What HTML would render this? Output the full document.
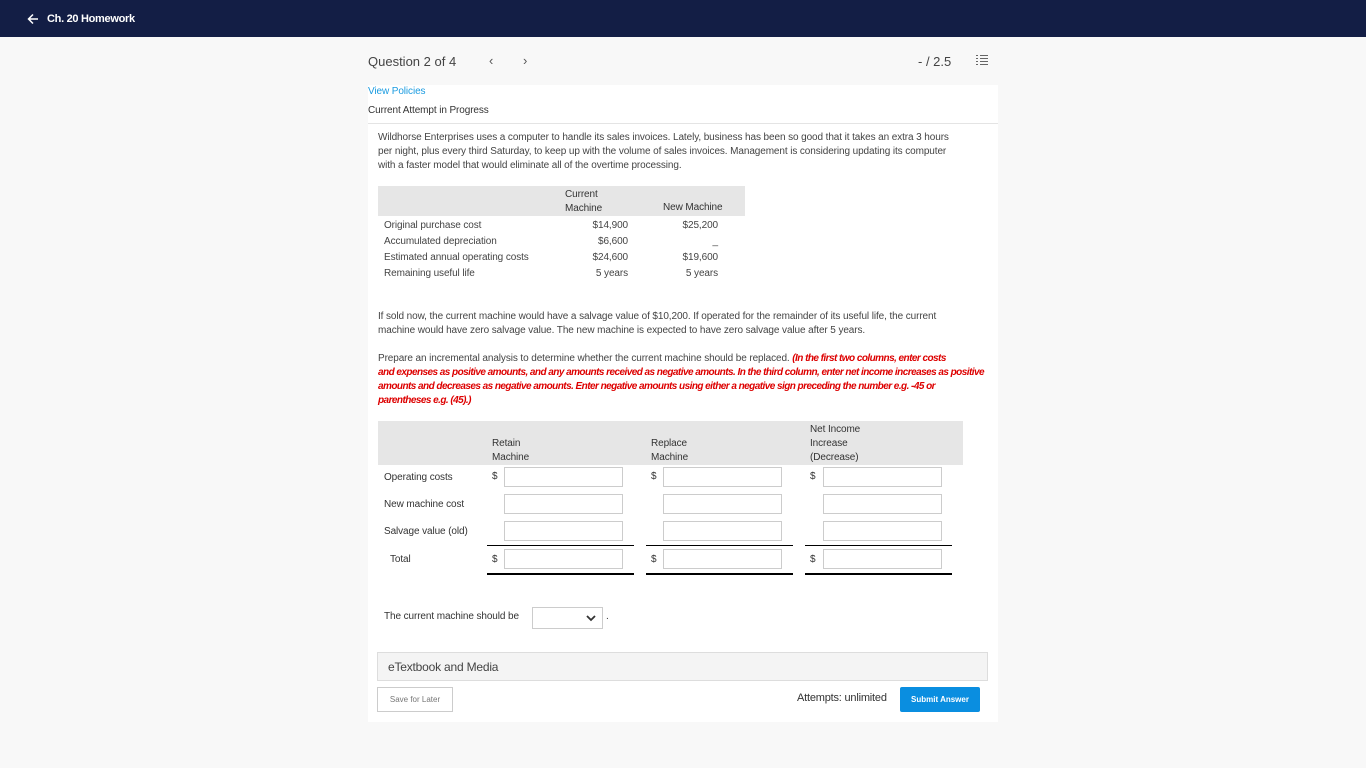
<!DOCTYPE html><html><head><style>
body{margin:0;width:1366px;height:768px;background:#f8f8f8;font-family:"Liberation Sans",sans-serif;color:#333;position:relative;overflow:hidden}
.a{position:absolute;white-space:nowrap}
.t{font-size:10px;letter-spacing:-0.1px}
.r{color:#d00;font-weight:bold;font-style:italic;letter-spacing:-0.55px}
.inp{position:absolute;width:119px;height:20px;border:1px solid #ccc;background:#fff;box-sizing:border-box}
.ln{position:absolute;height:1px;background:#000}
.ln2{position:absolute;height:2px;background:#000}
</style></head><body>
<div class="a" style="left:0;top:0;width:1366px;height:37px;background:#131e45"></div>
<svg class="a" style="left:27px;top:13px" width="12" height="12" viewBox="0 0 12 12"><path d="M11 6H1.5M6 1.5L1.5 6 6 10.5" stroke="#fff" stroke-width="1.5" fill="none"/></svg>
<div class="a" style="left:47px;top:13px;color:#fff;font-weight:bold;font-size:11px;letter-spacing:-0.3px">Ch. 20 Homework</div>
<div class="a" style="left:368px;top:54px;font-size:13px;color:#444">Question 2 of 4</div>
<div class="a" style="left:489px;top:53px;font-size:13px;color:#555">‹</div>
<div class="a" style="left:523px;top:53px;font-size:13px;color:#555">›</div>
<div class="a" style="left:918px;top:54px;font-size:13px;color:#444">- / 2.5</div>
<svg class="a" style="left:976px;top:54px" width="12" height="12" viewBox="0 0 12 12"><g stroke="#666" stroke-width="1"><path d="M0 1.5h2M4 1.5h8M0 4.5h2M4 4.5h8M0 7.5h2M4 7.5h8M0 10.5h2M4 10.5h8"/></g></svg>
<div class="a" style="left:368px;top:85px;width:630px;height:637px;background:#fff"></div>
<div class="a t" style="left:368px;top:86px;color:#1a9be0">View Policies</div>
<div class="a t" style="left:368px;top:105px;color:#333">Current Attempt in Progress</div>
<div class="a" style="left:368px;top:123px;width:630px;height:1px;background:#e4e4e4"></div>
<div class="a t" style="left:378px;top:131px;line-height:14px;color:#444">Wildhorse Enterprises uses a computer to handle its sales invoices. Lately, business has been so good that it takes an extra 3 hours<br>per night, plus every third Saturday, to keep up with the volume of sales invoices. Management is considering updating its computer<br>with a faster model that would eliminate all of the overtime processing.</div>
<div class="a" style="left:378px;top:186px;width:367px;height:30px;background:#e6e6e6"></div>
<div class="a t" style="left:565px;top:188px;line-height:14px">Current<br>Machine</div>
<div class="a t" style="left:663px;top:202px">New Machine</div>
<div class="a t" style="left:384px;top:218px;line-height:16px;color:#444">Original purchase cost<br>Accumulated depreciation<br>Estimated annual operating costs<br>Remaining useful life</div>
<div class="a t" style="left:560px;top:218px;width:68px;text-align:right;line-height:16px;color:#444">$14,900<br>$6,600<br>$24,600<br>5 years</div>
<div class="a t" style="left:650px;top:218px;width:68px;text-align:right;line-height:16px;color:#444">$25,200<br>_<br>$19,600<br>5 years</div>
<div class="a t" style="left:378px;top:310px;line-height:14px;color:#444">If sold now, the current machine would have a salvage value of $10,200. If operated for the remainder of its useful life, the current<br>machine would have zero salvage value. The new machine is expected to have zero salvage value after 5 years.</div>
<div class="a t" style="left:378px;top:352px;line-height:14px;color:#444">Prepare an incremental analysis to determine whether the current machine should be replaced. <span class="r">(In the first two columns, enter costs</span><br><span class="r">and expenses as positive amounts, and any amounts received as negative amounts. In the third column, enter net income increases as positive</span><br><span class="r">amounts and decreases as negative amounts. Enter negative amounts using either a negative sign preceding the number e.g. -45 or</span><br><span class="r">parentheses e.g. (45).)</span></div>
<div class="a" style="left:378px;top:421px;width:585px;height:44px;background:#e6e6e6"></div>
<div class="a t" style="left:492px;top:437px;line-height:14px">Retain<br>Machine</div>
<div class="a t" style="left:651px;top:437px;line-height:14px">Replace<br>Machine</div>
<div class="a t" style="left:810px;top:423px;line-height:14px">Net Income<br>Increase<br>(Decrease)</div>
<div class="a t" style="left:384px;top:472px">Operating costs</div>
<div class="a t" style="left:384px;top:499px">New machine cost</div>
<div class="a t" style="left:384px;top:526px">Salvage value (old)</div>
<div class="a t" style="left:390px;top:554px">Total</div>
<div class="a t" style="left:492px;top:471px">$</div><div class="a t" style="left:651px;top:471px">$</div><div class="a t" style="left:810px;top:471px">$</div>
<div class="a t" style="left:492px;top:554px">$</div><div class="a t" style="left:651px;top:554px">$</div><div class="a t" style="left:810px;top:554px">$</div>
<div class="inp" style="left:504px;top:467px"></div><div class="inp" style="left:663px;top:467px"></div><div class="inp" style="left:823px;top:467px"></div>
<div class="inp" style="left:504px;top:494px"></div><div class="inp" style="left:663px;top:494px"></div><div class="inp" style="left:823px;top:494px"></div>
<div class="inp" style="left:504px;top:521px"></div><div class="inp" style="left:663px;top:521px"></div><div class="inp" style="left:823px;top:521px"></div>
<div class="inp" style="left:504px;top:549px"></div><div class="inp" style="left:663px;top:549px"></div><div class="inp" style="left:823px;top:549px"></div>
<div class="ln" style="left:487px;top:545px;width:147px"></div><div class="ln" style="left:646px;top:545px;width:147px"></div><div class="ln" style="left:805px;top:545px;width:147px"></div>
<div class="ln2" style="left:487px;top:573px;width:147px"></div><div class="ln2" style="left:646px;top:573px;width:147px"></div><div class="ln2" style="left:805px;top:573px;width:147px"></div>
<div class="a t" style="left:384px;top:611px">The current machine should be</div>
<div class="a" style="left:532px;top:607px;width:71px;height:22px;border:1px solid #ccc;box-sizing:border-box;background:#fff"></div>
<svg class="a" style="left:586px;top:614px" width="10" height="8" viewBox="0 0 10 8"><path d="M1 2l4 4 4-4" stroke="#333" stroke-width="1.8" fill="none"/></svg>
<div class="a t" style="left:606px;top:611px">.</div>
<div class="a" style="left:377px;top:652px;width:611px;height:29px;background:#f4f4f4;border:1px solid #ddd;box-sizing:border-box"></div>
<div class="a" style="left:388px;top:660px;font-size:12px;color:#444;letter-spacing:-0.2px">eTextbook and Media</div>
<div class="a" style="left:377px;top:687px;width:76px;height:25px;border:1px solid #ccc;box-sizing:border-box;font-size:8px;color:#777;text-align:center;line-height:23px;background:#fff">Save for Later</div>
<div class="a" style="left:797px;top:692px;font-size:11px;color:#333;letter-spacing:-0.2px">Attempts: unlimited</div>
<div class="a" style="left:900px;top:687px;width:80px;height:25px;background:#0a8ee0;border-radius:2px;color:#fff;font-size:8px;font-weight:bold;text-align:center;line-height:25px">Submit Answer</div>
</body></html>
